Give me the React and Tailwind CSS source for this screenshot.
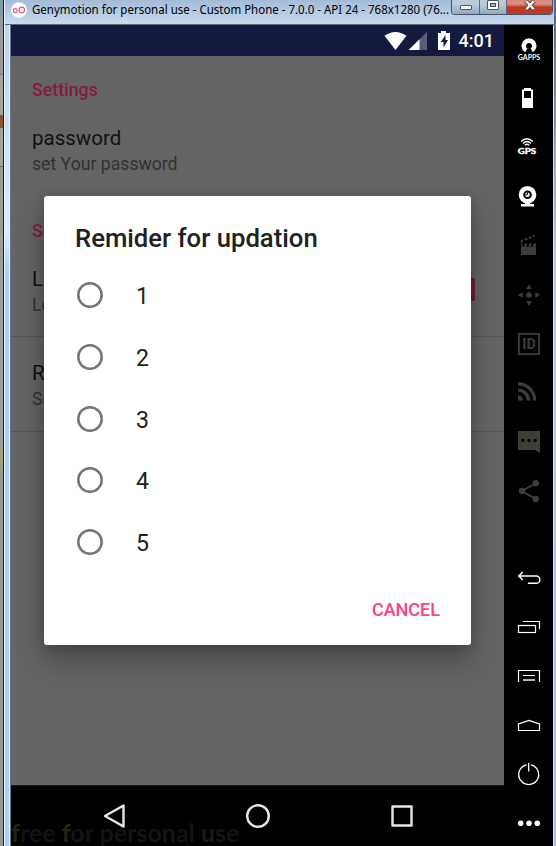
import React from "react";

const Icon = ({ children, className = "" }) => (
  <div className="flex h-[49px] shrink-0 items-center justify-center">
    <svg viewBox="0 0 25 25" className={"size-[25px] " + className} fill="currentColor">
      {children}
    </svg>
  </div>
);

function Sidebar() {
  const on = "text-white";
  const off = "text-[#3e3e38]";
  return (
    <aside className="flex h-full w-[49px] shrink-0 flex-col bg-black">
      <Icon className={on}>
        <path d="M9.200 15.300A7.500 7.500 0 1 1 16.800 15.300L14.600 11.600A3 3 0 1 0 11.400 11.600Z" />
        <text x="1.800" y="23.300" fontSize="7.200" fontWeight="700" fontFamily="Lato, sans-serif" textLength="22.400" lengthAdjust="spacingAndGlyphs">GAPPS</text>
      </Icon>
      <Icon className={on}>
        <path fillRule="evenodd" d="M8 2h7v1.500h2V22H6V3.500h2zM8 5v7h7V5z" />
      </Icon>
      <Icon className={on}>
        <g fill="none" stroke="currentColor" strokeWidth="1.300">
          <path d="M5.200 6.500Q11 1 16.800 6.500" />
          <path d="M7 8.400Q11 4.700 15 8.400" />
          <path d="M8.800 10.200Q11 8.200 13.200 10.200" />
        </g>
        <text x="1.700" y="19.300" fontSize="7.600" fontWeight="900" fontFamily="Lato, sans-serif" textLength="18.500" lengthAdjust="spacingAndGlyphs" stroke="currentColor" strokeWidth=".3">GPS</text>
      </Icon>
      <Icon className={on}>
        <circle cx="11.500" cy="10.800" r="8.800" />
        <path d="M9 18h5v2H9zM5 20h13v2.500H5z" />
        <circle cx="11.500" cy="10.700" r="3.300" fill="none" stroke="#000" strokeWidth="2" />
        <path d="M11.500 8.500v2.200H9.500" fill="none" stroke="#000" strokeWidth="1" />
      </Icon>
      <Icon className={off}>
        <path d="M5 13.500h15V22H5z" />
        <path d="M5 10.500h2l-1.500 3H5zM9 10.500h2.500L10 13.500H7.500zM13.500 10.500H16L14.500 13.500H12zM18 10.500h2v3H16.500z" />
        <path d="M4.500 7.500l2-.9 1 2.200-2.800 1.300zM8.300 5.800l2.200-1 1.500 2-2.200 1zM12.300 4l2.200-1 1.500 2-2.200 1zM16.300 2.300l1.500-.7 1 2.200-1 .4z" />
      </Icon>
      <Icon className={off}>
        <circle cx="13" cy="13" r="2.700" />
        <path d="M13 2.300l2.800 4.700h-5.600zM13 24l2.800-4.700h-5.600zM2 13l4.700-2.800v5.600zM24 13l-4.700-2.800v5.600z" />
      </Icon>
      <Icon className={off}>
        <rect x="2.900" y="2.900" width="20.200" height="20.200" fill="none" stroke="currentColor" strokeWidth="1.800" />
        <text x="6.200" y="18.300" fontSize="14.500" fontWeight="700" fontFamily="Roboto, sans-serif" textLength="13.500" lengthAdjust="spacingAndGlyphs">ID</text>
      </Icon>
      <Icon className={off}>
        <path d="M2 15.500a5 5 0 0 1 5 5H2z" />
        <g fill="none" stroke="currentColor" strokeWidth="3.200">
          <path d="M2 10a10.500 10.500 0 0 1 10.500 10.500M2 3.800a16.700 16.700 0 0 1 16.700 16.700" />
        </g>
      </Icon>
      <Icon className={off}>
        <path d="M2 2h22v22l-5-3H2z" />
        <g fill="#000">
          <circle cx="6.800" cy="11.500" r="1.700" />
          <circle cx="13" cy="11.500" r="1.700" />
          <circle cx="19.300" cy="11.500" r="1.700" />
        </g>
      </Icon>
      <Icon className={off}>
        <path d="M19.700 5.300L6 13l13.700 8" fill="none" stroke="currentColor" strokeWidth="1.700" />
        <circle cx="6" cy="13" r="3.200" />
        <circle cx="19.700" cy="5.300" r="3.200" />
        <circle cx="19.700" cy="21" r="3.200" />
      </Icon>
      <div className="h-[39px] shrink-0" />
      <Icon className={on}>
        <g fill="none" stroke="currentColor" strokeWidth="1.400">
          <path d="M6.800 6L2.700 10l4.100 4M3 10h17.200a3.500 3.500 0 0 1 0 7.300H12" />
        </g>
      </Icon>
      <Icon className={on}>
        <path d="M7 6.500h16.500v7.500" fill="none" stroke="currentColor" strokeWidth="1.200" />
        <rect x="2.500" y="10.500" width="17" height="7" fill="none" stroke="currentColor" strokeWidth="1.200" />
      </Icon>
      <Icon className={on}>
        <path d="M2.500 18V6.500h21V18M7 11.500h12" fill="none" stroke="currentColor" strokeWidth="1.200" />
        <path d="M7 15h12v2H7z" fill="#b5b5b5" />
      </Icon>
      <Icon className={on}>
        <path d="M2.500 17.500v-6.600L13 7.500l10.500 3.400v6.600z" fill="none" stroke="currentColor" strokeWidth="1.200" />
      </Icon>
      <Icon className={on}>
        <path d="M10.500 2.800a10 10 0 1 0 4.400 0M12.700.800v8.700" fill="none" stroke="currentColor" strokeWidth="1.300" />
      </Icon>
      <Icon className={on}>
        <circle cx="4.700" cy="12.200" r="2.800" />
        <circle cx="13" cy="12.200" r="2.800" />
        <circle cx="21.300" cy="12.200" r="2.800" />
      </Icon>
    </aside>
  );
}

function TitleBar() {
  return (
    <header className="flex h-6 w-full items-start bg-linear-to-b from-[#a3bbd6] to-[#c8dcef] pl-[6px]">
      <svg viewBox="0 0 16 16" className="mt-[2px] size-4 shrink-0">
        <circle cx="8" cy="8" r="7.800" fill="#fff" />
        <circle cx="4.300" cy="8.600" r="2" fill="none" stroke="#e8507f" strokeWidth="1.100" />
        <ellipse cx="10.800" cy="8" rx="2.700" ry="2.900" fill="none" stroke="#e8507f" strokeWidth="1.100" />
      </svg>
      <div className="ml-[5px] w-[419px] shrink-0 pt-px">
        <svg className="h-[20px] w-[419px] overflow-visible" viewBox="0 0 419 20">
          <text x="0" y="13" fontSize="12" fill="#000" fontFamily="'Noto Sans', sans-serif" textLength="417" lengthAdjust="spacingAndGlyphs">
            Genymotion for personal use - Custom Phone - 7.0.0 - API 24 - 768x1280 (76...
          </text>
        </svg>
      </div>
      <div className="flex h-[15px] w-[102px] shrink-0 overflow-hidden rounded-b-[4px] border border-t-0 border-[#47566b]">
        <div className="flex w-[28px] items-start justify-center border-r border-[#5d6c80] bg-linear-to-b from-[#bccbdc] from-30% to-[#91a7bf] pt-[5px]">
          <div className="h-[5px] w-3 rounded-[1px] border border-[#4b5362] bg-white" />
        </div>
        <div className="flex w-[27px] items-start justify-center border-r border-[#5d6c80] bg-linear-to-b from-[#bccbdc] from-30% to-[#91a7bf]">
          <div className="h-[10px] w-3 rounded-[1px] border border-[#4b5362] bg-white p-[2px]">
            <div className="h-[4px] border border-[#4b5362] bg-[#a4b5c8]" />
          </div>
        </div>
        <div className="flex flex-1 items-start justify-center bg-linear-to-b from-[#d98b7d] from-30% to-[#bd3a22] to-50%">
          <svg viewBox="0 0 14 12" className="h-3 w-3.5">
            <path d="M3 1l8 8.500M11 1L3 9.500" stroke="#5a3a42" strokeWidth="4.200" />
            <path d="M3.300 1.300l7.400 7.900M10.700 1.300L3.300 9.200" stroke="#fff" strokeWidth="2.400" />
          </svg>
        </div>
      </div>
    </header>
  );
}

function StatusBar() {
  return (
    <div className="flex h-[31px] shrink-0 items-center justify-end bg-[#14193f] pr-[10px] text-white">
      <svg viewBox="0 0 68 22" className="h-[22px] w-[68px]" fill="currentColor">
        <path d="M.5 5.800Q11.500-1.800 22.500 5.800L11.500 20z" />
        <path d="M43 1.800V20H24.700z" opacity=".3" />
        <path d="M35.500 9.300V20H24.700z" />
        <path d="M57 1h5v2h4v17H54V3h3z" />
        <path d="M61.500 5L56.800 12h2.700v5.500L64 10h-2.500z" fill="#14193f" />
      </svg>
      <span className="ml-[7px] pt-px text-[18px] leading-[20px] font-medium">4:01</span>
    </div>
  );
}

function Preference({ title, summary, className = "", children }) {
  return (
    <div className={"flex shrink-0 items-start pl-[21px] " + className}>
      <div className="flex-1">
        <div className="text-[20.500px] leading-[26px] text-[#111]">{title}</div>
        <div className="text-[17.650px] leading-[26px] text-[#333]">{summary}</div>
      </div>
      {children}
    </div>
  );
}

function Dialog() {
  return (
    <div className="absolute top-[171px] left-[33px] flex h-[449px] w-[427px] flex-col rounded-[3px] bg-white text-[#212121] shadow-[0_16px_28px_rgba(0,0,0,0.26),0_2px_12px_rgba(0,0,0,0.18)]">
      <h2 className="h-[68.500px] shrink-0 pt-[25px] pl-[31px] text-[25.700px] leading-[34px] font-medium">Remider for updation</h2>
      {[1, 2, 3, 4, 5].map((n) => (
        <label key={n} className="flex h-[61.700px] shrink-0 items-center pl-[33px]">
          <svg viewBox="0 0 26 26" className="size-[26px]" fill="none" stroke="#757575" strokeWidth="2.500">
            <circle cx="13" cy="13" r="11.700" />
          </svg>
          <span className="ml-[33px] pt-[4px] text-[23.100px] leading-[28px]">{n}</span>
        </label>
      ))}
      <div className="flex flex-1 items-center justify-end pt-[2px] pr-[31px]">
        <button className="text-[18px] leading-[22px] font-medium text-[#ff4081]">CANCEL</button>
      </div>
    </div>
  );
}

function Phone() {
  return (
    <main className="relative flex h-full w-[493px] shrink-0 flex-col overflow-hidden bg-[#646464]">
      <StatusBar />
      <div className="shrink-0 pt-[22px] pl-[21px] text-[17.800px] leading-[24px] font-medium text-[#841c44]">Settings</div>
      <Preference title="password" summary="set Your password" className="mt-[23px]" />
      <div className="mt-[42px] shrink-0 pl-[21px] text-[17.800px] leading-[24px] font-medium text-[#841c44]">Se</div>
      <Preference title="Lo" summary="Lo" className="mt-[23px] h-[71px] border-b border-[#555]">
        <span className="mt-[12px] mr-[29px] size-[23px] rounded-[2px] bg-[#731b3d]" />
      </Preference>
      <Preference title="R" summary="Se" className="h-[95px] border-b border-[#555] pt-[23px]" />
      <div className="min-h-0 flex-1" />
      <nav className="relative h-[61px] shrink-0 overflow-hidden border-t border-[#151515] bg-black">
        <div className="flex h-[60px] items-center justify-center gap-[116px] text-[#e6e6e6]">
          <svg viewBox="0 0 28 28" className="size-7" fill="none" stroke="currentColor" strokeWidth="2.400" strokeLinejoin="round">
            <path d="M23.500 3.500v21L5 14z" />
          </svg>
          <svg viewBox="0 0 28 28" className="size-7" fill="none" stroke="currentColor" strokeWidth="2.400">
            <circle cx="14" cy="14" r="10.800" />
          </svg>
          <svg viewBox="0 0 28 28" className="size-7" fill="none" stroke="currentColor" strokeWidth="2.400" strokeLinejoin="round">
            <rect x="4.500" y="4.500" width="19" height="19" />
          </svg>
        </div>
        <div className="absolute top-[32px] left-0 font-['Lato',sans-serif] text-[25px] leading-[28px] font-bold whitespace-nowrap text-[#131313]">
          <span className="text-[#24240f]">f</span>ree <span className="text-[#24240f]">f</span>or personal <span className="text-[#1b1b0e]">u</span>se
        </div>
      </nav>
      <Dialog />
    </main>
  );
}

export default function App() {
  return (
    <div className="flex h-[846px] w-[556px] overflow-hidden bg-[#a09f9b] font-['Roboto',sans-serif]">
      <div className="flex w-[3px] shrink-0 flex-col">
        <div className="h-[17px] bg-[#7f99a5]" />
        <div className="h-[58px] border-b border-[#777] bg-[#999]" />
        <div className="h-[40px] bg-[#a3a29e]" />
        <div className="h-[12px] bg-[#8a5334]" />
        <div className="h-[40px] border-y border-[#666] bg-[#a3a29e]" />
        <div className="h-[280px] bg-[#9c9b97]" />
        <div className="h-[24px] bg-[#a19e80]" />
        <div className="flex-1 bg-[#969591]" />
      </div>
      <div className="w-px shrink-0 bg-[#1d1d1d]" />
      <div className="flex w-[550px] shrink-0 flex-col border-l border-[#e8f3fc] bg-[#b5d5fa]">
        <TitleBar />
        <div className="h-px shrink-0 bg-[#5d6a75]" />
        <div className="flex h-[821px] shrink-0">
          <div className="w-[5px] shrink-0 border-r border-[#e2effb] bg-linear-to-b from-[#bdd2e9] via-[#dcebfa] via-25% to-[#accff4] to-30%" />
          <div className="w-px shrink-0 bg-[#68788a]" />
          <Phone />
          <Sidebar />
          <div className="w-px shrink-0 bg-[#d5e6f5]" />
        </div>
      </div>
      <div className="w-[2px] shrink-0 bg-linear-to-b from-[#56657a] via-[#b5cbe4] via-30% to-[#a5c3e4]" />
    </div>
  );
}
